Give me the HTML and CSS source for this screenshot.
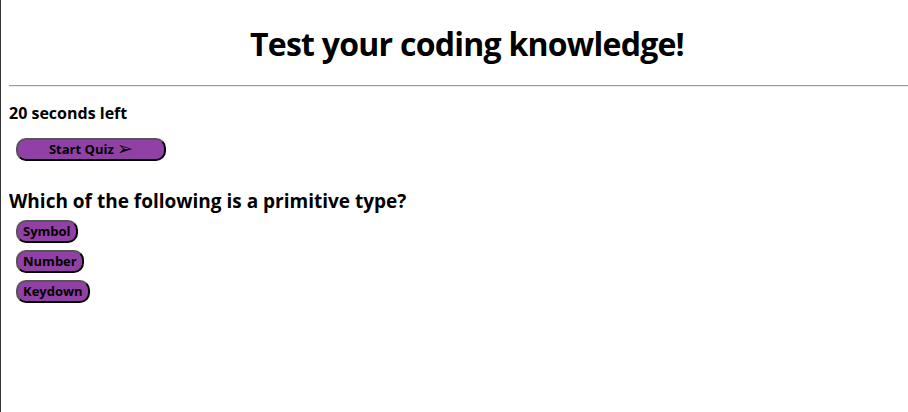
FILE: index.html
```html
<!DOCTYPE html>
<html lang="en">
<head>
<meta charset="utf-8">
<title>Coding Quiz</title>
<link rel="stylesheet" href="styles.css">
</head>
<body>
<header class="header">
  <h1 class="title">Test your coding knowledge!</h1>
</header>
<hr class="divider">
<main class="quiz">
  <p class="timer">20 seconds left</p>
  <div class="start-row">
    <button class="btn btn-start">Start Quiz <span class="arrow">➢</span></button>
  </div>
  <h3 class="question">Which of the following is a primitive type?</h3>
  <div class="answers">
    <button class="btn">Symbol</button>
    <button class="btn">Number</button>
    <button class="btn">Keydown</button>
  </div>
</main>
</body>
</html>
```
FILE: styles.css
```css
html {
  height: 100%;
  border-left: 1px solid #333;
  box-sizing: border-box;
}
body {
  margin: 0 0 0 8px;
  font-family: "Open Sans", "DejaVu Sans", sans-serif;
  color: #000;
  background: #fff;
}
.header {
  padding: 22px 0 0 17px;
  text-align: center;
}
.title {
  margin: 0;
  font-size: 32px;
  line-height: 44px;
  font-weight: 700;
  letter-spacing: -0.75px;
}
.divider {
  margin: 19px 0 0 0;
  border: 0;
  border-top: 1px solid #9a9a9a;
  border-bottom: 1px solid #eee;
  height: 0;
}
.quiz {
  display: flex;
  flex-direction: column;
  align-items: flex-start;
}
.timer {
  margin: 15px 0 0 0;
  font-size: 16px;
  line-height: 22px;
  font-weight: 700;
}
.start-row {
  margin: 13px 0 0 7px;
}
.btn {
  font-family: inherit;
  font-size: 13px;
  font-weight: 700;
  line-height: 17px;
  height: 23px;
  color: #000;
  background: #9140a5;
  border: 2px solid #000;
  border-top-color: #555;
  border-left-color: #555;
  border-radius: 10px;
  padding: 1px 5px;
  cursor: pointer;
}
.btn-start {
  width: 150px;
}
.arrow {
  display: inline-block;
  font-family: "DejaVu Sans", sans-serif;
  font-size: 19px;
  font-weight: 400;
  line-height: 15px;
  vertical-align: -1px;
}
.question {
  margin: 27px 0 0 0;
  font-size: 19px;
  line-height: 26px;
  font-weight: 700;
}
.answers {
  margin: 6px 0 0 7px;
  display: flex;
  flex-direction: column;
  align-items: flex-start;
  gap: 7px;
}
```
